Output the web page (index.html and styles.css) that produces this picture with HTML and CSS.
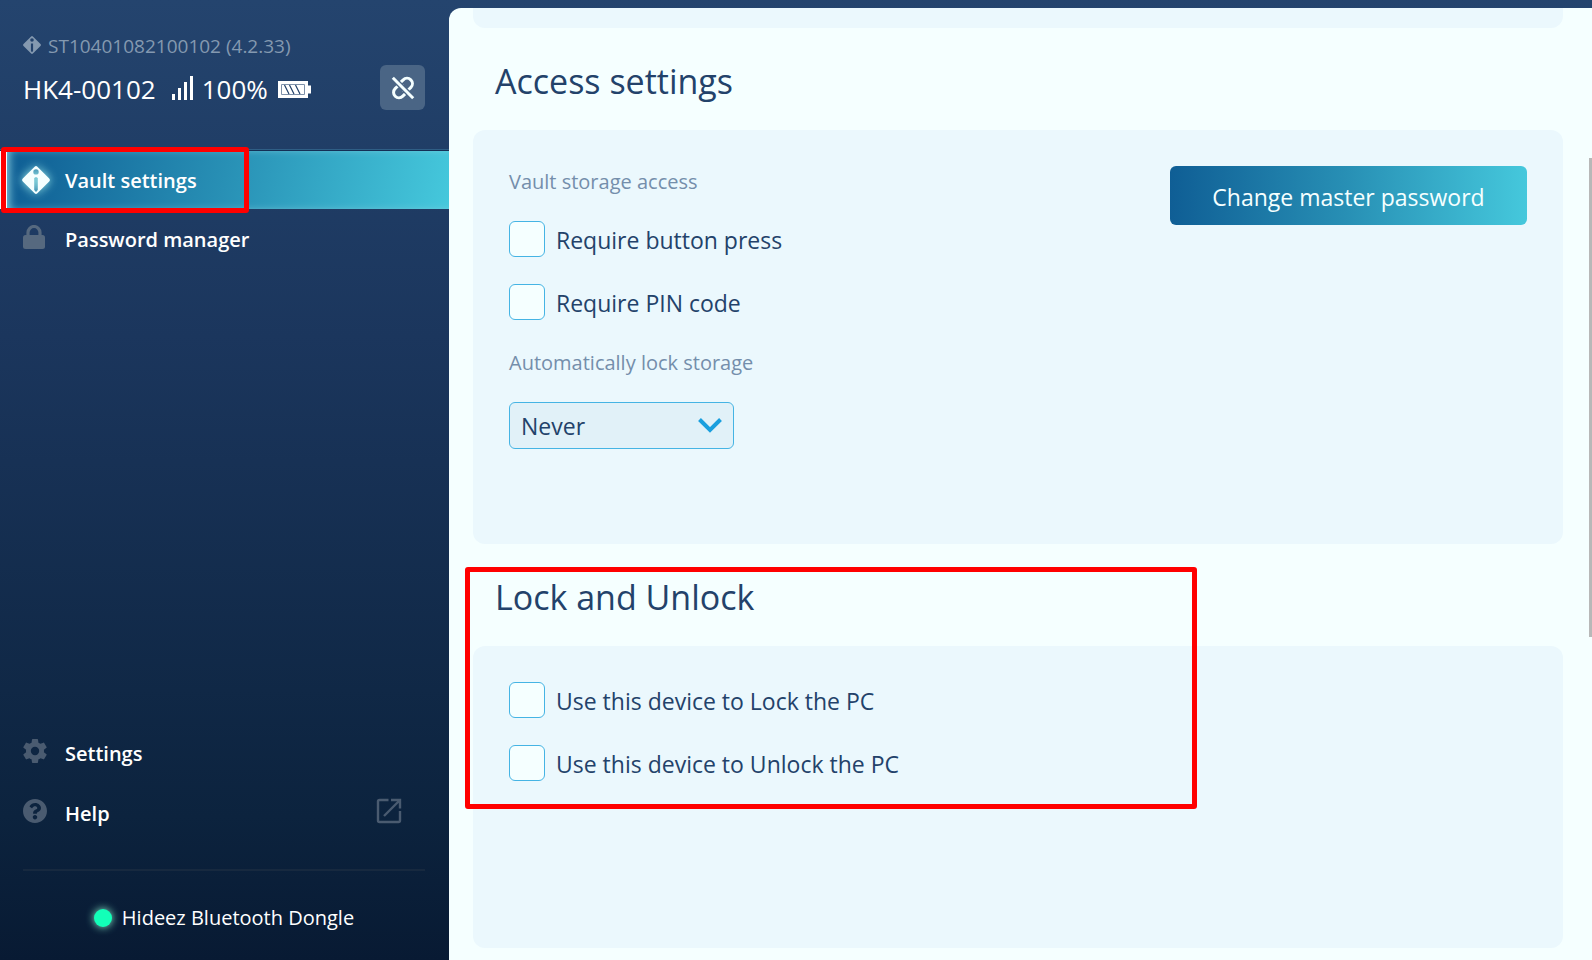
FILE: index.html
```html
<!DOCTYPE html>
<html lang="en">
<head>
<meta charset="utf-8">
<title>Vault settings</title>
<link rel="stylesheet" href="styles.css">
</head>
<body>
<div class="app">
  <aside class="sidebar">
    <header class="device">
      <div class="serial">
        <svg class="serial-icon" viewBox="0 0 28 28" width="18" height="18"><path fill="currentColor" fill-rule="evenodd" d="M12.6.8a2 2 0 0 1 2.8 0L27.2 12.6a2 2 0 0 1 0 2.8L15.4 27.2a2 2 0 0 1-2.8 0L.8 15.4a2 2 0 0 1 0-2.8ZM14 3.5a2.8 2.8 0 1 0 0 5.6a2.8 2.8 0 0 0 0-5.6ZM12.3 11.5v11.8l1.7 2 1.7-2V11.5Z"/></svg>
        <span>ST10401082100102 (4.2.33)</span>
      </div>
      <div class="device-row">
        <span class="device-name">HK4-00102</span>
        <svg class="signal" viewBox="0 0 22 24" width="22" height="24" fill="#fff"><path d="M0 18h3v6H0zM6 12h3v12H6zM12 6h3v18h-3zM18 0h3v24h-3z"/></svg>
        <span class="charge">100%</span>
        <svg class="battery" viewBox="0 0 33 17" width="33" height="17"><path fill="#fff" d="M0 0h30v4.500h3v8h-3V17H0z"/><path fill="#fff" stroke="#7e91aa" d="M3.500 3.500h23v10h-23z"/><path stroke="#23426a" stroke-width="1.200" d="M6.500 4l4.500 9M11.500 4l4.500 9M17.500 4l4.500 9"/></svg>
        <button class="unlink" type="button" aria-label="Disconnect">
          <svg viewBox="0 0 24 24" width="24" height="24" fill="none" stroke="#f5ffff" stroke-width="3"><path d="M9.600 6.400L12.200 3.900A5.200 5.200 0 0 1 19.900 11.400L18 13.300A4.800 4.800 0 0 1 11.800 13.700M14.400 17.600L11.800 20.100A5.200 5.200 0 0 1 4.100 12.600L6 10.700A4.800 4.800 0 0 1 12.200 10.300"/><path stroke="#4a6585" stroke-width="5.500" d="M3.500 3.500l17 17"/><path stroke-width="3" d="M1.800 1.800l20.400 20.400"/></svg>
        </button>
      </div>
    </header>
    <nav class="nav">
      <a class="nav-item active" href="#vault">
        <svg class="nav-icon glow" viewBox="0 0 28 28" width="28" height="28"><path fill="#f5ffff" fill-rule="evenodd" d="M12.600.8a2 2 0 0 1 2.800 0L27.200 12.600a2 2 0 0 1 0 2.800L15.400 27.200a2 2 0 0 1-2.800 0L.8 15.400a2 2 0 0 1 0-2.800ZM14 3.200a2.700 2.700 0 1 0 0 5.400a2.700 2.700 0 0 0 0-5.400ZM12.200 12v12l1.800 2 1.800-2V12l-1.800-1Z"/></svg>
        <span>Vault settings</span>
        <i class="mark mark-nav"></i>
      </a>
      <a class="nav-item" href="#passwords">
        <svg class="nav-icon lock" viewBox="0 0 22 24" width="22" height="24"><rect y="10" width="22" height="14" rx="2.500" fill="currentColor"/><path fill="none" stroke="currentColor" stroke-width="3.200" d="M5 11V7.500a6 6 0 0 1 12 0V11"/></svg>
        <span>Password manager</span>
      </a>
    </nav>
    <nav class="nav nav-bottom">
      <a class="nav-item" href="#settings">
        <svg class="nav-icon" viewBox="2 2 20 20" width="24" height="24"><path fill="currentColor" d="M19.430 12.980c.04-.32.07-.64.07-.98s-.03-.66-.07-.98l2.110-1.650c.19-.15.240-.42.120-.64l-2-3.460c-.12-.22-.39-.3-.61-.22l-2.490 1c-.52-.4-1.080-.73-1.690-.98l-.38-2.650A.49.49 0 0 0 14 2h-4c-.25 0-.46.180-.49.420l-.38 2.650c-.61.250-1.170.590-1.690.98l-2.490-1c-.23-.09-.49 0-.61.220l-2 3.460c-.13.220-.07.490.120.640l2.110 1.650c-.04.320-.07.650-.07.980s.03.660.070.980l-2.110 1.650c-.19.150-.24.420-.12.640l2 3.460c.12.220.390.300.610.220l2.490-1c.52.400 1.080.730 1.690.980l.38 2.650c.03.240.240.420.490.420h4c.25 0 .46-.18.490-.42l.38-2.650c.61-.25 1.170-.59 1.690-.98l2.490 1c.23.090.49 0 .61-.22l2-3.460c.12-.22.070-.49-.12-.64ZM12 15.500a3.500 3.500 0 1 1 0-7a3.500 3.500 0 0 1 0 7Z"/></svg>
        <span>Settings</span>
      </a>
      <a class="nav-item" href="#help">
        <svg class="nav-icon" viewBox="8 8 496 496" width="24" height="24"><path fill="currentColor" d="M504 256c0 137-111 248-248 248S8 393 8 256 119 8 256 8s248 111 248 248zM262.700 90c-54.500 0-89.300 23-116.500 63.800-3.500 5.300-2.400 12.400 2.700 16.300l34.700 26.300c5.200 3.900 12.600 3 16.700-2.100 17.900-22.700 30.100-35.800 57.300-35.800 20.400 0 45.700 13.100 45.700 33 0 15-12.400 22.700-32.500 34C247.100 238.500 216 254.900 216 296v4c0 6.600 5.400 12 12 12h56c6.600 0 12-5.400 12-12v-1.300c0-28.500 83.200-29.600 83.200-106.700 0-58-60.200-102-116.500-102zM256 338c-25.400 0-46 20.600-46 46s20.600 46 46 46 46-20.600 46-46-20.600-46-46-46z"/></svg>
        <span>Help</span>
        <svg class="external" viewBox="0 0 26 26" width="26" height="26" fill="none" stroke="currentColor" stroke-width="2.400"><path d="M12.500 2H3.500A1.500 1.500 0 0 0 2 3.500v19A1.500 1.500 0 0 0 3.500 24h19a1.500 1.500 0 0 0 1.500-1.500V13M15 2h9v8.500M24 2L8 18"/></svg>
      </a>
    </nav>
    <footer class="dongle"><i class="dot"></i><span>Hideez Bluetooth Dongle</span></footer>
  </aside>
  <main class="content">
    <div class="panel panel-end"></div>
    <section class="section">
      <h2 class="title">Access settings</h2>
      <div class="panel panel-access">
        <div class="fields">
          <p class="caption">Vault storage access</p>
          <div class="checks">
            <label class="check"><input class="box" type="checkbox"><span>Require button press</span></label>
            <label class="check"><input class="box" type="checkbox"><span>Require PIN code</span></label>
          </div>
          <label class="caption" for="autolock">Automatically lock storage</label>
          <div class="select-wrap">
            <select class="select" id="autolock"><option>Never</option></select>
            <svg class="chevron" viewBox="0 0 24 15" width="24" height="15"><path fill="none" stroke="#1a9fde" stroke-width="4" d="M1.500 1.500L12 12L22.500 1.500"/></svg>
          </div>
        </div>
        <button class="primary" type="button">Change master password</button>
      </div>
    </section>
    <section class="section">
      <h2 class="title">Lock and Unlock</h2>
      <div class="panel panel-lock">
        <div class="checks">
          <label class="check"><input class="box" type="checkbox"><span>Use this device to Lock the PC</span></label>
          <label class="check"><input class="box" type="checkbox"><span>Use this device to Unlock the PC</span></label>
        </div>
      </div>
      <i class="mark mark-lock"></i>
    </section>
    <i class="thumb"></i>
  </main>
</div>
</body>
</html>
```
FILE: styles.css
```css
* { box-sizing: border-box; }

body {
  margin: 0;
  font-family: "Open Sans", "Noto Sans", sans-serif;
  color: #23426a;
}

.app {
  display: grid;
  grid-template-columns: 449px 1fr;
  min-height: 100vh;
  padding-top: 8px;
  background: linear-gradient(#24446e, #1b365d 35%, #0c233e 85%, #081a33);
  overflow: hidden;
}

.sidebar {
  display: flex;
  flex-direction: column;
  color: #fff;
}

.device { padding: 24px 24px 40px 23px; }

.serial {
  display: flex;
  align-items: center;
  gap: 7px;
  font-size: 19px;
  line-height: 28px;
  color: #8499b0;
}

.serial-icon { margin-bottom: 2px; }

.device-row {
  display: flex;
  align-items: center;
  margin-top: 5px;
  font-size: 26px;
  line-height: 41px;
}

.device-name,
.charge { padding-top: 4px; }

.signal { margin-left: 16px; }
.charge { margin-left: 8px; }
.battery { margin: 4px 0 0 10px; }

.unlink {
  display: grid;
  place-items: center;
  width: 45px;
  height: 45px;
  margin-left: auto;
  padding: 0;
  border: 0;
  border-radius: 6px;
  background: #4a6585;
}

.nav-item {
  position: relative;
  display: flex;
  align-items: center;
  height: 60px;
  padding: 2px 47px 0 23px;
  color: #fff;
  font-size: 20px;
  font-weight: 600;
  line-height: 30px;
  text-decoration: none;
}

.nav-icon {
  flex: none;
  margin: 0 18px 6px 0;
  color: #56697f;
}

.lock { margin-right: 20px; }

.active {
  height: 59px;
  border-top: 1px solid #142f55;
  background: linear-gradient(100deg, #0e5c93, #2890b5 50%, #45c8dc);
  box-shadow: 0 -1px #2f5e85, inset 7px 0 #f5ffff, inset 12px 0 10px -3px #8fd3e0;
}

.glow {
  margin: 0 15px 2px -1px;
  filter: drop-shadow(0 0 5px #a6f3ee);
}

.external {
  margin: 0 0 6px auto;
  color: #4a5b70;
}

.nav-bottom {
  margin-top: auto;
  padding-bottom: 26px;
}

.nav-bottom .nav-icon { color: #4a5b70; }

.dongle {
  display: flex;
  align-items: center;
  justify-content: center;
  gap: 10px;
  height: 91px;
  margin: 0 24px 0 23px;
  padding-top: 4px;
  border-top: 2px solid #17293f;
  font-size: 20px;
  line-height: 30px;
}

.dot {
  width: 18px;
  height: 18px;
  border-radius: 50%;
  background: #12ffb8;
  box-shadow: 0 0 8px #8ff5d2;
}

.content {
  position: relative;
  padding: 0 29px 12px 24px;
  border-top-left-radius: 12px;
  background: #f5ffff;
}

.section { position: relative; }

.title {
  margin: 0;
  padding: 4px 22px 0;
  font-size: 34px;
  font-weight: 400;
  line-height: 98px;
}

.panel {
  padding: 36px;
  border-radius: 12px;
  background: #ebf8fd;
}

.panel-end {
  height: 20px;
  padding: 0;
  border-radius: 0 0 12px 12px;
}

.panel-access {
  display: flex;
  align-items: flex-start;
  justify-content: space-between;
  min-height: 414px;
}

.panel-lock { min-height: 302px; }

.caption {
  display: block;
  margin: 0;
  padding-top: 2px;
  font-size: 20px;
  line-height: 28px;
  color: #748eab;
}

.checks {
  display: flex;
  flex-direction: column;
  gap: 27px;
}

.fields .checks { margin: 25px 0 27px; }

.check {
  display: flex;
  align-items: center;
  gap: 11px;
  font-size: 23px;
  line-height: 34px;
}

.check span { padding-top: 2px; }

.box {
  appearance: none;
  width: 36px;
  height: 36px;
  margin: 0;
  border: 1px solid #45b4e4;
  border-radius: 6px;
  background: #f5ffff;
}

.select-wrap {
  position: relative;
  width: 225px;
  margin-top: 25px;
}

.select {
  appearance: none;
  display: block;
  width: 100%;
  height: 47px;
  padding: 0 11px;
  border: 1px solid #45b4e4;
  border-radius: 6px;
  background: #e1f1f8;
  color: inherit;
  font: inherit;
  font-size: 23px;
}

.chevron {
  position: absolute;
  top: 16px;
  right: 12px;
  pointer-events: none;
}

.primary {
  width: 357px;
  height: 59px;
  padding: 2px 0 0;
  border: 0;
  border-radius: 6px;
  background: linear-gradient(90deg, #0f5e95, #2890b5 50%, #45c8dc);
  color: #f5ffff;
  font: inherit;
  font-size: 23px;
}

.mark {
  position: absolute;
  border: 5px solid #f00;
  border-radius: 3px;
  pointer-events: none;
}

.mark-nav {
  top: -4px;
  left: 1px;
  width: 248px;
  height: 66px;
}

.mark-lock {
  top: 23px;
  left: -8px;
  width: 732px;
  height: 242px;
}

.thumb {
  position: absolute;
  top: 150px;
  right: 0;
  width: 3px;
  height: 479px;
  background: #b8b8b8;
}
```
